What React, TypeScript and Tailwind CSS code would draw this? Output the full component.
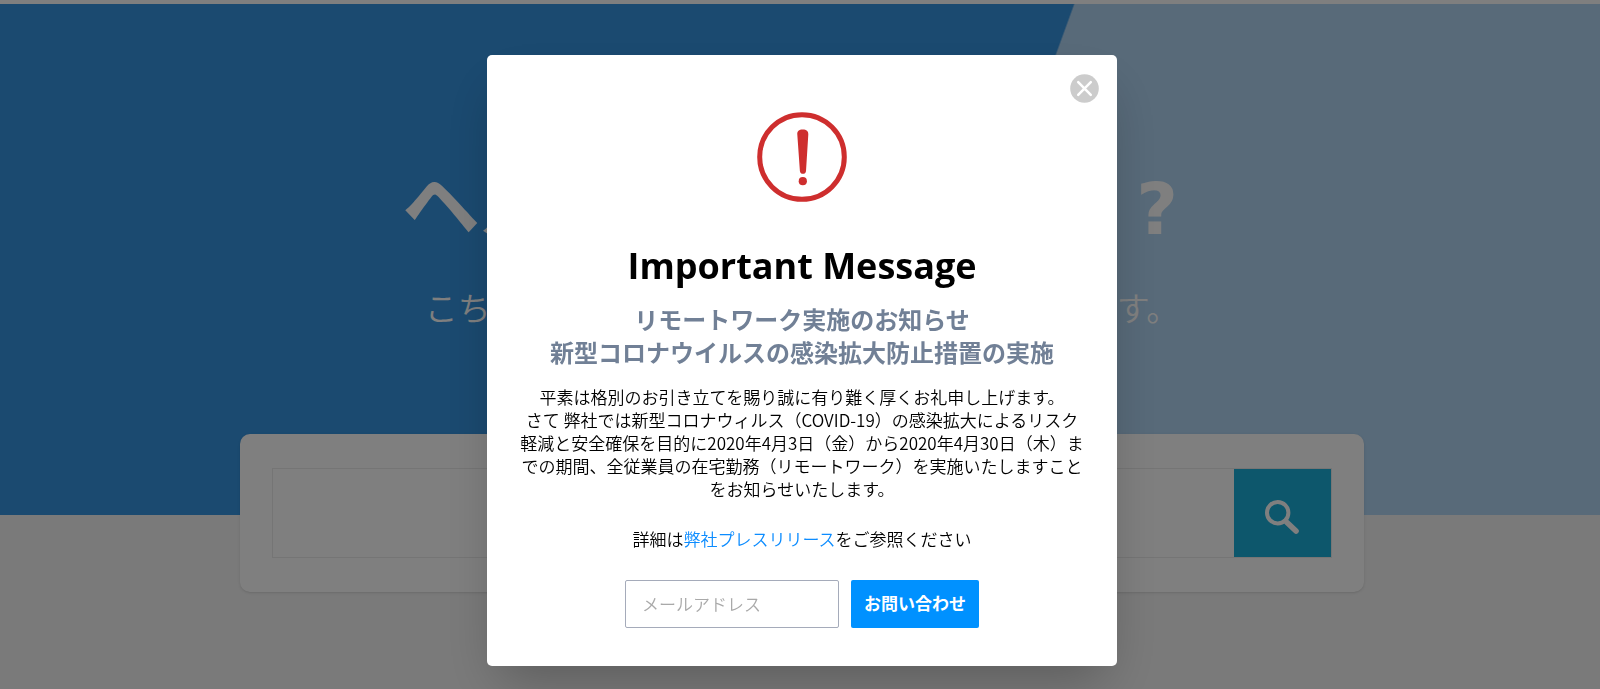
import React from "react";

function SearchIcon() {
  return (
    <svg viewBox="0 0 34 34" className="h-[34px] w-[34px]" fill="none" aria-hidden="true">
      <circle cx="12.7" cy="12.7" r="10.7" stroke="white" strokeWidth="4" />
      <path d="M22 22.5 31 31" stroke="white" strokeWidth="5.6" strokeLinecap="round" />
      <path d="M19.5 20 24 24.5" stroke="white" strokeWidth="3.5" />
    </svg>
  );
}

function AlertIcon() {
  return (
    <svg viewBox="0 0 90 90" className="h-[90px] w-[90px]" aria-hidden="true">
      <circle cx="45" cy="45" r="42.3" fill="none" stroke="#ce2e2e" strokeWidth="5" />
      <path
        d="M40.3 22.5C40.1 19 41.9 17.4 45.7 17.4S51.5 19 51.3 22.5L49 59C48.8 62.8 43.2 62.8 42.9 59Z"
        fill="#ce2e2e"
      />
      <circle cx="45.8" cy="69.2" r="4.1" fill="#ce2e2e" />
    </svg>
  );
}

function CloseIcon() {
  return (
    <svg viewBox="0 0 29 29" className="h-[29px] w-[29px]" aria-hidden="true">
      <circle cx="14.5" cy="14.5" r="14.3" fill="#cccccc" />
      <path d="M8.2 8.2 20.8 20.8M20.8 8.2 8.2 20.8" stroke="white" strokeWidth="2.5" strokeLinecap="round" />
    </svg>
  );
}

function HelpPage() {
  return (
    <main className="min-h-screen overflow-hidden bg-[#f4f4f4] pb-24">
      <div className="h-1 bg-white" />
      <section className="h-[511px] bg-[linear-gradient(110deg,#3694e0_60.1%,#b0d4f2_60.2%)] pl-1 text-center text-white">
        <h1 className="pt-[140px] text-[78px] leading-[120px] font-bold">
          ヘルプが必要ですか
          <span className="pr-6 pl-8 font-['DejaVu_Sans',sans-serif] text-[72px]">?</span>
        </h1>
        <p className="mt-4 text-[33px] leading-[48px] font-[350]">こちらでよくある質問を検索することができます。</p>
      </section>
      <div className="pl-1">
        <form
          role="search"
          onSubmit={(e) => e.preventDefault()}
          className="relative mx-auto -mt-[81px] w-[calc(70%+6px)] rounded-[10px] bg-white px-8 py-[34px] shadow-sm"
        >
          <div className="flex h-[90px] border border-[#ebebeb]">
            <input type="search" aria-label="検索" className="min-w-0 flex-1 bg-white px-6 text-2xl outline-none" />
            <button
              type="submit"
              aria-label="検索する"
              className="flex w-[97px] items-center justify-center bg-[#1aaed8] pt-2"
            >
              <SearchIcon />
            </button>
          </div>
        </form>
      </div>
    </main>
  );
}

function MessageDialog() {
  return (
    <div className="fixed inset-0 flex items-start justify-center bg-black/50 pt-[55px] pl-1">
      <div
        role="dialog"
        aria-modal="true"
        aria-labelledby="dialog-title"
        className="relative w-[630px] max-w-full rounded-[5px] bg-white px-10 pt-[57px] pb-[38px] text-center text-black shadow-2xl"
      >
        <button type="button" aria-label="閉じる" className="absolute top-[19px] right-[18px]">
          <CloseIcon />
        </button>
        <div className="flex justify-center">
          <AlertIcon />
        </div>
        <h2 id="dialog-title" className="mt-10 text-[36px] leading-[48px] font-bold">
          Important Message
        </h2>
        <h3 className="mt-[13px] text-[24px] leading-[33px] font-bold text-[#718096]">
          リモートワーク実施のお知らせ
          <br />
          新型コロナウイルスの感染拡大防止措置の実施
        </h3>
        <p className="-mx-4 mt-4 font-['Noto_Sans_CJK_JP',sans-serif] text-[17px] leading-[23px] font-[350]">
          平素は格別のお引き立てを賜り誠に有り難く厚くお礼申し上げます。
          <br />
          さて 弊社では新型コロナウィルス（COVID-19）の感染拡大によるリスク
          <br />
          軽減と安全確保を目的に2020年4月3日（金）から2020年4月30日（木）ま
          <br />
          での期間、全従業員の在宅勤務（リモートワーク）を実施いたしますこと
          <br />
          をお知らせいたします。
        </p>
        <p className="mt-7 text-[17px] leading-[23px] font-[350]">
          詳細は
          <a href="#press" className="text-[#0c8cff]">
            弊社プレスリリース
          </a>
          をご参照ください
        </p>
        <form onSubmit={(e) => e.preventDefault()} className="mt-[29px] flex justify-center gap-3">
          <input
            type="email"
            aria-label="メールアドレス"
            placeholder="メールアドレス"
            className="h-12 w-[214px] rounded-xs border border-[#a5abba] px-4 text-[17px] font-[350] outline-none placeholder:text-[#a9a9a9]"
          />
          <button type="submit" className="h-12 w-32 rounded-xs bg-[#0091ff] text-[17px] font-bold text-white">
            お問い合わせ
          </button>
        </form>
      </div>
    </div>
  );
}

export default function App() {
  return (
    <div lang="ja" className="font-['Open_Sans','Noto_Sans_CJK_JP',sans-serif]">
      <HelpPage />
      <MessageDialog />
    </div>
  );
}
